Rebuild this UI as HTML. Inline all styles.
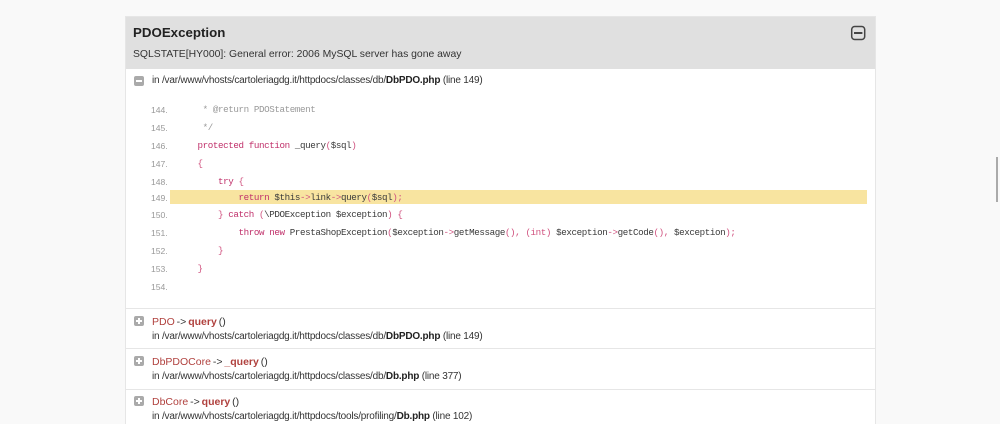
<!DOCTYPE html>
<html>
<head>
<meta charset="utf-8">
<style>
html,body{margin:0;padding:0;width:1000px;height:424px;overflow:hidden;background:#f9f9f9;}
body{position:relative;font-family:"Liberation Sans",Arial,sans-serif;color:#222;}
#w{position:absolute;left:0;top:0;width:1000px;height:424px;overflow:hidden;filter:blur(.3px);}
.a{position:absolute;white-space:pre;}
.p{position:absolute;left:125px;top:16px;width:749px;height:420px;background:#fff;border:1px solid #e6e6e6;box-sizing:content-box;}
.h{position:absolute;left:126px;top:17px;width:749px;height:52px;background:#e0e0e0;}
.f{font-size:10px;letter-spacing:-.2px;line-height:12px;color:#333;left:152px;}
.f b{color:#222;}
.t{font-size:10.5px;word-spacing:-1px;line-height:13px;left:152px;color:#333;}
.t i{font-style:normal;color:#b0413e;}
.t b{color:#b0413e;}
.n,.c{font-family:"Liberation Mono",monospace;font-size:9.2px;letter-spacing:-.39px;line-height:12px;}
.n{font-family:"Liberation Sans",sans-serif;font-size:8.6px;letter-spacing:0;left:151px;color:#999;}
.c{left:177px;color:#3a3a3a;}
.k{color:#c0306a;}
.o{color:#d0527f;}
.m{color:#999;}
.sep{position:absolute;left:126px;width:749px;height:1px;background:#e6e6e6;}
.ic{position:absolute;left:134px;width:10px;height:10px;border-radius:2px;background:#aaa;}
.ic:before{content:"";position:absolute;left:2px;top:4px;width:6px;height:2px;background:#fff;}
.ic.pl:after{content:"";position:absolute;left:4px;top:2px;width:2px;height:6px;background:#fff;}
</style>
</head>
<body>
<div id="w">
<div class="p"></div>
<div class="h"></div>
<div class="a" style="left:133px;top:25px;font-size:13.3px;line-height:16px;font-weight:bold;color:#222;">PDOException</div>
<div class="a" style="left:133px;top:48px;font-size:10.4px;line-height:13px;color:#333;">SQLSTATE[HY000]: General error: 2006 MySQL server has gone away</div>
<svg class="a" style="left:850px;top:25px;" width="16" height="16" viewBox="0 0 16 16"><rect x="1.7" y="1.5" width="13" height="13" rx="3" fill="none" stroke="#444" stroke-width="1.5"/><rect x="4" y="7" width="8.4" height="2" fill="#444"/></svg>

<div class="ic" style="top:76px;"></div>
<div class="a f" style="top:75px;">in /var/www/vhosts/cartoleriagdg.it/httpdocs/classes/db/<b>DbPDO.php</b> (line 149)</div>

<div class="a" style="left:170px;top:190px;width:697px;height:14px;background:#f8e4a0;"></div>

<div class="a n" style="top:104px;">144.</div>
<div class="a n" style="top:122px;">145.</div>
<div class="a n" style="top:140px;">146.</div>
<div class="a n" style="top:158px;">147.</div>
<div class="a n" style="top:176px;">148.</div>
<div class="a n" style="top:192px;">149.</div>
<div class="a n" style="top:209px;">150.</div>
<div class="a n" style="top:227px;">151.</div>
<div class="a n" style="top:245px;">152.</div>
<div class="a n" style="top:263px;">153.</div>
<div class="a n" style="top:281px;">154.</div>

<div class="a c m" style="left:197.5px;top:104px;"> * @return PDOStatement</div>
<div class="a c m" style="left:197.5px;top:122px;"> */</div>
<div class="a c" style="left:197.5px;top:140px;"><span class="k">protected function</span> _query<span class="o">(</span>$sql<span class="o">)</span></div>
<div class="a c o" style="left:197.5px;top:158px;">{</div>
<div class="a c" style="left:218px;top:176px;"><span class="k">try</span> <span class="o">{</span></div>
<div class="a c" style="left:238.5px;top:192px;"><span class="k">return</span> $this<span class="o">-&gt;</span>link<span class="o">-&gt;</span>query<span class="o">(</span>$sql<span class="o">);</span></div>
<div class="a c" style="left:218px;top:209px;"><span class="o">}</span> <span class="k">catch</span> <span class="o">(</span>\PDOException $exception<span class="o">) {</span></div>
<div class="a c" style="left:238.5px;top:227px;"><span class="k">throw new</span> PrestaShopException<span class="o">(</span>$exception<span class="o">-&gt;</span>getMessage<span class="o">(),</span> <span class="o">(int)</span> $exception<span class="o">-&gt;</span>getCode<span class="o">(),</span> $exception<span class="o">);</span></div>
<div class="a c o" style="left:218px;top:245px;">}</div>
<div class="a c o" style="left:197.5px;top:263px;">}</div>

<div class="sep" style="top:308px;"></div>
<div class="ic pl" style="top:316px;"></div>
<div class="a t" style="top:316px;"><i>PDO</i> -&gt; <b>query</b> ()</div>
<div class="a f" style="top:331px;">in /var/www/vhosts/cartoleriagdg.it/httpdocs/classes/db/<b>DbPDO.php</b> (line 149)</div>

<div class="sep" style="top:348px;"></div>
<div class="ic pl" style="top:356px;"></div>
<div class="a t" style="top:356px;"><i>DbPDOCore</i> -&gt; <b>_query</b> ()</div>
<div class="a f" style="top:371px;">in /var/www/vhosts/cartoleriagdg.it/httpdocs/classes/db/<b>Db.php</b> (line 377)</div>

<div class="sep" style="top:389px;"></div>
<div class="ic pl" style="top:396px;"></div>
<div class="a t" style="top:396px;"><i>DbCore</i> -&gt; <b>query</b> ()</div>
<div class="a f" style="top:411px;">in /var/www/vhosts/cartoleriagdg.it/httpdocs/tools/profiling/<b>Db.php</b> (line 102)</div>

<div class="a" style="left:996px;top:157px;width:2px;height:45px;background:#aaa;"></div>
</div>
</body>
</html>
